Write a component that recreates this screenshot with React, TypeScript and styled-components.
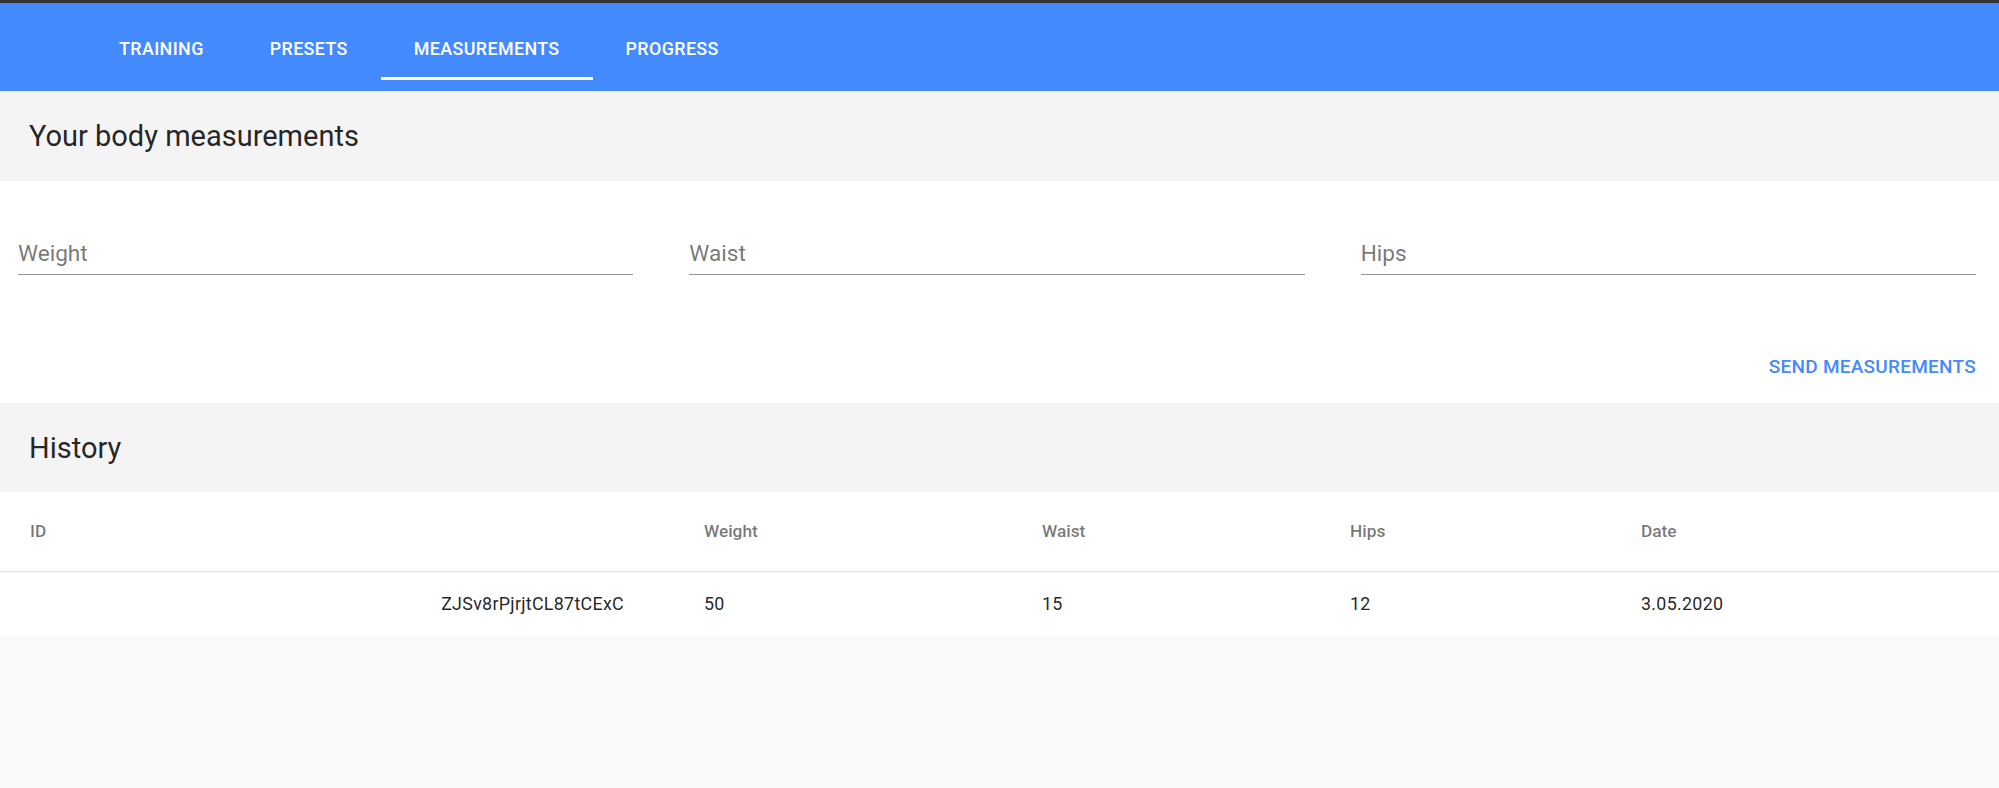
import React from "react";
import styled, { createGlobalStyle } from "styled-components";

const GlobalStyle = createGlobalStyle`
  html, body {
    margin: 0;
    padding: 0;
    background: #fafafa;
    font-family: Roboto, "Liberation Sans", Arial, sans-serif;
  }
  * { box-sizing: border-box; }
`;

const Page = styled.div`
  min-height: 788px;
  background: #fafafa;
`;

const AppBar = styled.header`
  background: #448aff;
  border-top: 3px solid #333;
  padding: 13px 0 11px 86px;
`;

const TabList = styled.nav`
  display: flex;
  height: 64px;
`;

const Tab = styled.button<{ $active?: boolean }>`
  display: flex;
  align-items: center;
  justify-content: center;
  padding: 0 33px;
  border: none;
  background: transparent;
  color: #fff;
  font-family: Roboto, sans-serif;
  font-size: 17.85px;
  font-weight: 500;
  letter-spacing: 0.4px;
  text-transform: uppercase;
  cursor: pointer;
  box-shadow: ${(p) => (p.$active ? "inset 0 -3px 0 #fff" : "none")};
`;

const SectionHeader = styled.div<{ $h: number }>`
  display: flex;
  align-items: center;
  height: ${(p) => p.$h}px;
  padding-left: 29px;
  background: #f4f4f4;
`;

const Title = styled.h2`
  margin: 0;
  font-family: Roboto, sans-serif;
  font-size: 29px;
  font-weight: 400;
  color: rgba(0, 0, 0, 0.87);
`;

const FormSection = styled.section`
  background: #fff;
  padding: 60px 23px 24px 18px;
`;

const FieldGrid = styled.div`
  display: grid;
  grid-template-columns: repeat(3, 1fr);
  column-gap: 56px;
`;

const Field = styled.label`
  display: block;
  padding-bottom: 7px;
  border-bottom: 1px solid rgba(0, 0, 0, 0.42);
  font-family: Roboto, sans-serif;
  font-size: 22.6px;
  line-height: 26px;
  color: rgba(0, 0, 0, 0.54);
`;

const Actions = styled.div`
  display: flex;
  justify-content: flex-end;
  margin-top: 80px;
`;

const TextButton = styled.button`
  padding: 0;
  border: none;
  background: transparent;
  color: #448aff;
  font-family: Roboto, sans-serif;
  font-size: 19px;
  font-weight: 500;
  letter-spacing: 0.25px;
  line-height: 24px;
  text-transform: uppercase;
  cursor: pointer;
`;

const Table = styled.table`
  width: 100%;
  border-collapse: collapse;
  table-layout: fixed;
  background: #fff;
  font-family: Roboto, sans-serif;
`;

const HeadCell = styled.th`
  height: 79px;
  padding: 0 0 0 30px;
  text-align: left;
  font-size: 17.3px;
  font-weight: 500;
  color: rgba(0, 0, 0, 0.54);
  border-bottom: 1px solid #e0e0e0;
`;

const BodyCell = styled.td<{ $right?: boolean }>`
  height: 65px;
  padding: ${(p) => (p.$right ? "0 50px 0 0" : "0 0 0 30px")};
  text-align: ${(p) => (p.$right ? "right" : "left")};
  font-size: 17.85px;
  font-weight: 400;
  letter-spacing: 0.3px;
  color: rgba(0, 0, 0, 0.87);
`;

const tabs = ["Training", "Presets", "Measurements", "Progress"];
const colWidths = [674, 338, 308, 291];

const rows = [
  { id: "ZJSv8rPjrjtCL87tCExC", weight: "50", waist: "15", hips: "12", date: "3.05.2020" },
];

export default function App() {
  return (
    <Page>
      <GlobalStyle />
      <AppBar>
        <TabList>
          {tabs.map((t) => (
            <Tab key={t} $active={t === "Measurements"}>
              {t}
            </Tab>
          ))}
        </TabList>
      </AppBar>

      <SectionHeader $h={90}>
        <Title>Your body measurements</Title>
      </SectionHeader>

      <FormSection>
        <FieldGrid>
          <Field>Weight</Field>
          <Field>Waist</Field>
          <Field>Hips</Field>
        </FieldGrid>
        <Actions>
          <TextButton>Send measurements</TextButton>
        </Actions>
      </FormSection>

      <SectionHeader $h={89}>
        <Title>History</Title>
      </SectionHeader>

      <Table>
        <colgroup>
          {colWidths.map((w, i) => (
            <col key={i} style={{ width: w }} />
          ))}
          <col />
        </colgroup>
        <thead>
          <tr>
            <HeadCell>ID</HeadCell>
            <HeadCell>Weight</HeadCell>
            <HeadCell>Waist</HeadCell>
            <HeadCell>Hips</HeadCell>
            <HeadCell>Date</HeadCell>
          </tr>
        </thead>
        <tbody>
          {rows.map((r) => (
            <tr key={r.id}>
              <BodyCell $right>{r.id}</BodyCell>
              <BodyCell>{r.weight}</BodyCell>
              <BodyCell>{r.waist}</BodyCell>
              <BodyCell>{r.hips}</BodyCell>
              <BodyCell>{r.date}</BodyCell>
            </tr>
          ))}
        </tbody>
      </Table>
    </Page>
  );
}
